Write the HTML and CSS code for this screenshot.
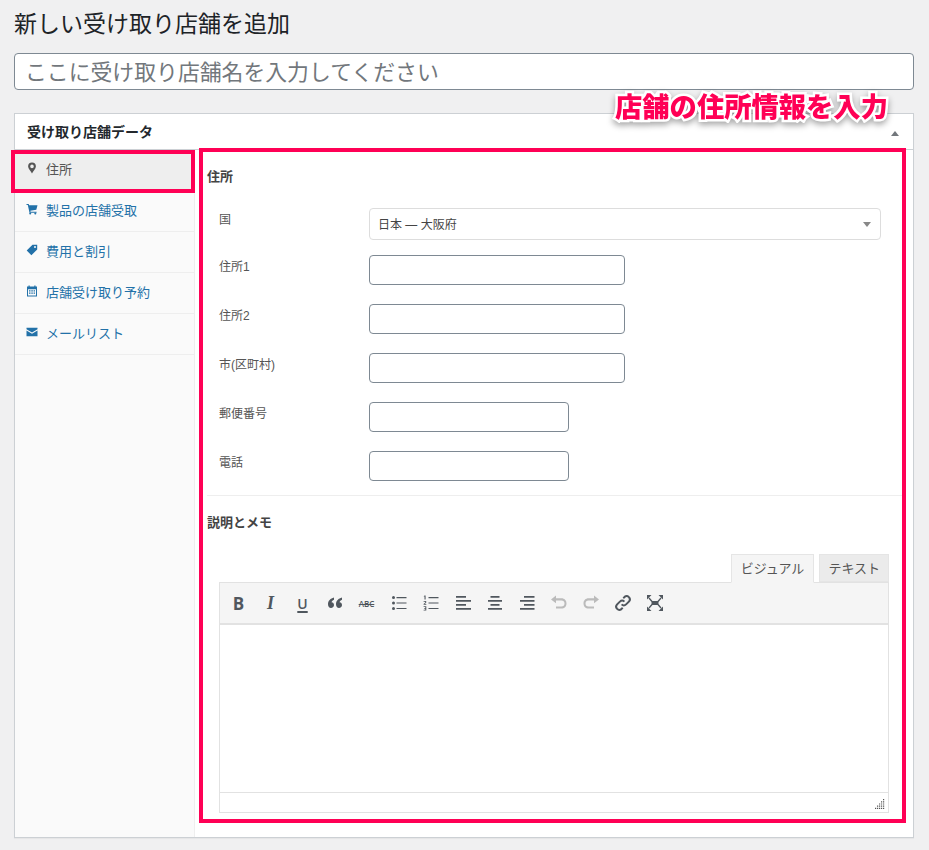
FILE: index.html
```html
<!DOCTYPE html>
<html lang="ja">
<head>
<meta charset="utf-8">
<title>新しい受け取り店舗を追加</title>
<link rel="stylesheet" href="styles.css">
</head>
<body>
<div class="page">
  <h1 class="title">新しい受け取り店舗を追加</h1>
  <input class="name-input" type="text" placeholder="ここに受け取り店舗名を入力してください">
  <section class="panel">
    <header class="panel-head">
      <h2>受け取り店舗データ</h2>
      <span class="caret-up"></span>
    </header>
    <div class="panel-body">
      <nav class="side">
        <a class="side-item active">
          <svg viewBox="0 0 12 12"><path fill-rule="evenodd" d="M6 0.5a3.9 3.9 0 0 0-3.9 3.9C2.100 6.800 5 9 6 11.500 7 9 9.900 6.800 9.900 4.400A3.900 3.900 0 0 0 6 .5zm0 2.100a1.800 1.800 0 1 1 0 3.600 1.800 1.800 0 0 1 0-3.600z"/></svg>
          <span>住所</span>
        </a>
        <a class="side-item">
          <svg viewBox="0 0 12 12"><path d="M.5 1h2.200l.4 1.300H11.500L10.300 6.800l-6 .9.300 1h6v1.100H3.500L1.800 2.100H.5z"/><circle cx="4.200" cy="10.600" r="1"/><circle cx="9.300" cy="10.600" r="1"/></svg>
          <span>製品の店舗受取</span>
        </a>
        <a class="side-item">
          <svg viewBox="0 0 12 12"><path fill-rule="evenodd" d="M6.500.8h4.700v4.700L5.400 11.300.7 6.600zM9 2a1 1 0 1 0 0 2 1 1 0 0 0 0-2z"/></svg>
          <span>費用と割引</span>
        </a>
        <a class="side-item">
          <svg viewBox="0 0 12 12"><path fill-rule="evenodd" d="M1 1.500h1.500V.5h1.200v1h4.600v-1h1.200v1H11v10H1zM2 4.200v6.300h8V4.200zM3 5.200h1.500v1.300H3zM5.300 5.200h1.500v1.300H5.300zM7.600 5.200H9v1.300H7.600zM3 7.500h1.500v1.300H3zM5.300 7.500h1.500v1.300H5.300zM7.600 7.500H9v1.300H7.600z"/></svg>
          <span>店舗受け取り予約</span>
        </a>
        <a class="side-item">
          <svg viewBox="0 0 12 12"><path d="M.5 1.800h11v1.400L6 6.400.5 3.200zM.5 4.600 6 7.800l5.500-3.200v5.600H.5z"/></svg>
          <span>メールリスト</span>
        </a>
      </nav>
      <main class="content">
        <h3 class="section-title">住所</h3>
        <div class="fields">
          <div class="row row-select">
            <label>国</label>
            <div class="select"><span>日本 — 大阪府</span><i class="caret-down"></i></div>
          </div>
          <div class="row"><label>住所1</label><input class="field wide" type="text"></div>
          <div class="row"><label>住所2</label><input class="field wide" type="text"></div>
          <div class="row"><label>市(区町村)</label><input class="field wide" type="text"></div>
          <div class="row"><label>郵便番号</label><input class="field" type="text"></div>
          <div class="row"><label>電話</label><input class="field" type="text"></div>
        </div>
        <div class="notes">
          <h3 class="section-title">説明とメモ</h3>
          <div class="editor">
            <div class="tabs">
              <span class="tab on">ビジュアル</span>
              <span class="tab">テキスト</span>
            </div>
            <div class="toolbar">
              <span class="tool t-b">B</span>
              <span class="tool t-i">I</span>
              <span class="tool t-u">U</span>
              <span class="tool"><svg viewBox="0 0 20 20"><path d="M9 4.500C5.500 5.300 3 7.800 3 11.300c0 2.400 1.300 3.700 3 3.700s3-1.200 3-2.900c0-1.600-1-2.700-2.500-2.800.3-1.100 1.300-2 2.500-2.500zM17 4.500c-3.500.8-6 3.300-6 6.800 0 2.400 1.300 3.700 3 3.700s3-1.200 3-2.900c0-1.600-1-2.700-2.500-2.800.3-1.100 1.300-2 2.500-2.500z"/></svg></span>
              <span class="tool t-s">ABC</span>
              <span class="tool"><svg viewBox="0 0 20 20"><circle cx="4.500" cy="4.500" r="1.500"/><circle cx="4.500" cy="10" r="1.500"/><circle cx="4.500" cy="15.500" r="1.500"/><path d="M7.500 4h10v1.200h-10zM7.500 9.400h10v1.200h-10zM7.500 14.900h10v1.200h-10z"/></svg></span>
              <span class="tool"><svg viewBox="0 0 20 20"><path d="M3.500 2.500h1.100v4H3.500V3.400H2.600zM2.600 8h2.600v1.800L3.700 11h1.600v.8H2.600v-.9l1.700-1.300v-.8H2.600zM2.600 13.300h2.700v4.200H2.600v-.8h1.700v-.9H3.200V15h1.100v-.9H2.600z"/><path d="M7.500 4h10v1.200h-10zM7.500 9.400h10v1.200h-10zM7.500 14.900h10v1.200h-10z"/></svg></span>
              <span class="tool"><svg viewBox="0 0 20 20"><path d="M3 3h10v1.700H3zM3 7h15v1.700H3zM3 11h10v1.700H3zM3 15h15v1.700H3z"/></svg></span>
              <span class="tool"><svg viewBox="0 0 20 20"><path d="M5.500 3h9v1.700h-9zM3 7h14v1.700H3zM5.500 11h9v1.700h-9zM3 15h14v1.700H3z"/></svg></span>
              <span class="tool"><svg viewBox="0 0 20 20"><path d="M7 3h10.500v1.700H7zM3 7h14.500v1.700H3zM7 11h10.500v1.700H7zM3 15h14.500v1.700H3z"/></svg></span>
              <span class="tool off"><svg viewBox="0 0 20 20"><path d="M2 6.500 7 2.500v2.800h5.500c2.900 0 5 2.100 5 5.100 0 3-2.100 5.100-5 5.100H7v-2h5.500c1.800 0 3-1.300 3-3.100s-1.200-3-3-3H7v2.800z"/></svg></span>
              <span class="tool off"><svg viewBox="0 0 20 20"><path d="M18 6.500 13 2.500v2.800H7.500c-2.900 0-5 2.100-5 5.100 0 3 2.100 5.100 5 5.100H13v-2H7.500c-1.800 0-3-1.300-3-3.100s1.200-3 3-3H13v2.800z"/></svg></span>
              <span class="tool"><svg viewBox="0 0 20 20" class="stroke"><path d="M8.600 11.400a3.200 3.200 0 0 0 4.500 0l3-3a3.200 3.200 0 0 0-4.500-4.500L10.300 5.200"/><path d="M11.400 8.600a3.200 3.200 0 0 0-4.500 0l-3 3a3.200 3.200 0 0 0 4.500 4.500l1.300-1.300"/></svg></span>
              <span class="tool"><svg viewBox="0 0 20 20"><path d="M6.500 8h7v4h-7z"/><path d="M2 2h4.500L2 6.500zM18 2v4.500L13.500 2zM2 18v-4.500L6.500 18zM18 18h-4.500L18 13.500z"/><path d="M4 5l3 3.500M16 5l-3 3.500M4 15l3-3.500M16 15l-3-3.500" fill="none" stroke="currentColor" stroke-width="1.300"/></svg></span>
            </div>
            <div class="edit-area"></div>
            <div class="status"><svg class="grip" viewBox="0 0 10 10"><path d="M8 0h1.200v1.200H8zM8 2.200h1.200v1.200H8zM6 2.200h1.200v1.200H6zM8 4.400h1.200v1.200H8zM6 4.400h1.200v1.200H6zM4 4.400h1.200v1.200H4zM8 6.600h1.200v1.200H8zM6 6.600h1.200v1.200H6zM4 6.600h1.200v1.200H4zM2 6.600h1.200v1.200H2zM8 8.800h1.200V10H8zM6 8.800h1.200V10H6zM4 8.800h1.200V10H4zM2 8.800h1.200V10H2zM0 8.800h1.200V10H0z"/></svg></div>
          </div>
        </div>
      </main>
    </div>
  </section>
</div>
<div class="mark mark-side"></div>
<div class="mark mark-main"></div>
<div class="callout">店舗の住所情報を入力</div>
</body>
</html>
```
FILE: styles.css
```css
* { box-sizing: border-box; }
html, body { margin: 0; padding: 0; }
body {
  width: 929px;
  height: 850px;
  overflow: hidden;
  position: relative;
  background: #f0f0f1;
  color: #3c434a;
  font-family: "Liberation Sans", "Noto Sans CJK JP", sans-serif;
  font-size: 13px;
}
.page { padding: 0 15px 0 14px; }
.title {
  margin: 0;
  height: 53px;
  padding-top: 8px;
  font-size: 23px;
  line-height: 32px;
  font-weight: 400;
  color: #1d2327;
}
.name-input {
  display: block;
  width: 100%;
  height: 37px;
  padding: 2px 10px 0;
  border: 1px solid #7e8993;
  border-radius: 4px;
  background: #fff;
  font: 400 21.850px/32px "Liberation Sans", "Noto Sans CJK JP", sans-serif;
}
.name-input::placeholder { color: #72777c; opacity: 1; }
.panel {
  margin-top: 23px;
  height: 725px;
  display: flex;
  flex-direction: column;
  background: #fff;
  border: 1px solid #ccd0d4;
  box-shadow: 0 1px 1px rgba(0,0,0,.04);
}
.panel-head {
  flex: none;
  height: 36px;
  display: flex;
  align-items: center;
  justify-content: space-between;
  padding: 0 14px 0 12px;
  border-bottom: 1px solid #ccd0d4;
}
.panel-head h2 {
  margin: 0;
  font-size: 14px;
  line-height: 34px;
  font-weight: 700;
  color: #23282d;
}
.caret-up {
  width: 0; height: 0;
  margin-top: 4px;
  border-left: 4px solid transparent;
  border-right: 4px solid transparent;
  border-bottom: 5px solid #72777c;
}
.panel-body { flex: 1; display: flex; min-height: 0; }
.side {
  flex: none;
  width: 180px;
  background: #fafafa;
  border-right: 1px solid #eee;
}
.side-item {
  height: 41px;
  display: flex;
  align-items: center;
  padding: 0 0 0 11px;
  gap: 8px;
  border-bottom: 1px solid #eee;
  color: #2271a8;
  font-size: 13px;
  line-height: 20px;
}
.side-item svg { width: 12px; height: 12px; fill: currentColor; flex: none; margin-top: -4px; }
.side-item.active { background: #eee; color: #555; border-bottom-color: #eee; }
.content { flex: 1; min-width: 0; padding-left: 12px; }
.section-title {
  margin: 0;
  font-size: 13px;
  line-height: 18px;
  font-weight: 700;
  color: #444;
}
.content > .section-title { padding-top: 18px; }
.fields {
  margin-right: 9px;
  padding: 22px 0 14px 12px;
  border-bottom: 1px solid #eee;
}
.row {
  display: flex;
  align-items: flex-start;
  height: 30px;
  margin-bottom: 19px;
}
.row:last-child { margin-bottom: 0; }
.row-select { height: 32px; margin-bottom: 15px; }
.row label {
  flex: none;
  width: 150px;
  font-size: 12px;
  line-height: 18px;
  color: #555;
  padding-top: 3px;
}
.select {
  flex: none;
  width: 512px;
  height: 32px;
  display: flex;
  align-items: center;
  justify-content: space-between;
  padding: 0 9px 2px 8px;
  background: #fff;
  border: 1px solid #ddd;
  border-radius: 4px;
  font-size: 12px;
  color: #444;
}
.caret-down {
  width: 0; height: 0;
  margin-top: 2px;
  border-left: 4px solid transparent;
  border-right: 4px solid transparent;
  border-top: 5px solid #888;
}
.field {
  display: block;
  width: 200px;
  height: 30px;
  background: #fff;
  border: 1px solid #7e8993;
  border-radius: 4px;
}
.field.wide { width: 256px; }
.notes { padding-top: 18px; }
.editor { margin: 22px 24px 0 12px; }
.tabs {
  display: flex;
  justify-content: flex-end;
  gap: 5px;
  height: 28px;
  position: relative;
  z-index: 1;
}
.tab {
  height: 28px;
  padding: 0 8px 2px;
  display: flex;
  align-items: center;
  font-size: 13px;
  color: #555;
  background: #ebebeb;
  border: 1px solid #e5e5e5;
}
.tab.on { background: #f5f5f5; border-bottom-color: #f5f5f5; height: 29px; padding: 0 9px 3px; }
.toolbar {
  height: 43px;
  display: flex;
  align-items: center;
  padding: 0 0 0 2.500px;
  background: #f5f5f5;
  border: 1px solid #e2e2e2;
  border-bottom: 2px solid #e2e2e2;
}
.tool {
  flex: none;
  width: 32px;
  height: 32px;
  display: flex;
  align-items: center;
  justify-content: center;
  color: #50575e;
  font-family: "Open Sans", sans-serif;
}
.tool svg { width: 20px; height: 20px; fill: currentColor; }
.tool svg.stroke { fill: none; stroke: currentColor; stroke-width: 2; }
.tool.off { color: #bbb; }
.t-b { font-size: 17px; font-weight: 700; }
.t-i { font-family: "Liberation Serif", serif; font-size: 18px; font-weight: 700; font-style: italic; }
.t-u { font-size: 14px; font-weight: 600; text-decoration: underline; text-decoration-thickness: 2px; text-underline-offset: 2px; }
.t-s { font-size: 8px; font-weight: 600; text-decoration: line-through; }
.edit-area {
  height: 167px;
  background: #fff;
  border-left: 1px solid #e2e2e2;
  border-right: 1px solid #e2e2e2;
}
.status {
  height: 21px;
  display: flex;
  justify-content: flex-end;
  align-items: flex-end;
  padding: 0 3px 3px 0;
  background: #fff;
  border: 1px solid #e2e2e2;
}
.grip { width: 10px; height: 10px; fill: #555; }
.mark {
  position: absolute;
  border: 4.500px solid #ff0055;
}
.mark-side { left: 11px; top: 150px; width: 184px; height: 43px; }
.mark-main { left: 199px; top: 148px; width: 707px; height: 675px; }
.callout {
  position: absolute;
  left: 615px;
  top: 90px;
  font-size: 27.300px;
  line-height: 36px;
  font-weight: 900;
  white-space: nowrap;
  color: #ff0055;
  paint-order: stroke fill;
  -webkit-text-stroke: 5px #fff;
  filter: drop-shadow(0 3px 3px rgba(0,0,0,.35));
}
```
